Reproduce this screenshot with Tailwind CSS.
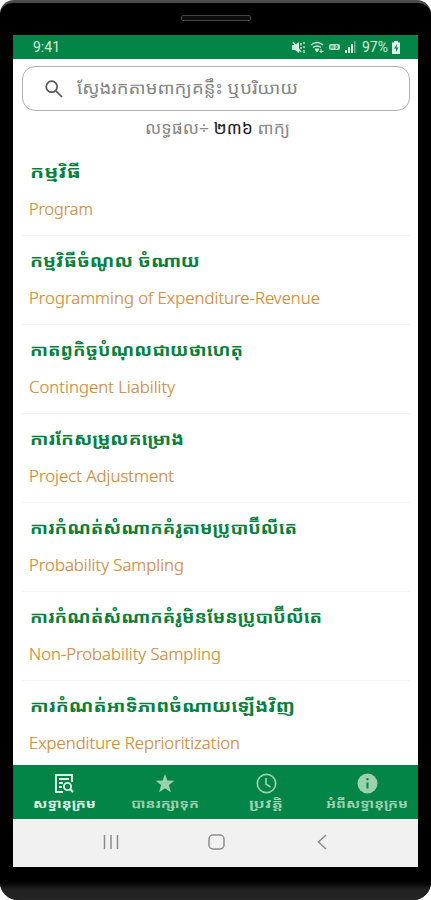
<!DOCTYPE html>
<html lang="km">
<head>
<meta charset="utf-8">
<title>សទ្ទានុក្រម</title>
<script src="https://cdn.jsdelivr.net/npm/@tailwindcss/browser@4"></script>
</head>
<body class="w-[431px] h-[900px] overflow-hidden bg-white font-['Noto_Sans','Noto_Sans_Khmer','Khmer_OS',sans-serif]">
<div class="w-[431px] h-[900px] rounded-t-[14px] rounded-b-[18px] bg-black border-t-[3px] border-[#4b4b4b] flex flex-col overflow-hidden">
  <div class="h-[32px] shrink-0 flex justify-center pt-[12px]"><div class="w-[70px] h-[6px] rounded-[2px] border border-[#454545] bg-[#0c0c0c]"></div></div>
  <div class="mx-[13px] h-[832px] shrink-0 bg-white flex flex-col overflow-hidden">
    <header class="h-[24px] shrink-0 bg-[#038547] flex items-center pl-[20px] pr-[18px] text-[#d2eddd] font-[Roboto,sans-serif]">
      <span class="text-[14px] mr-auto">9:41</span>
      <svg class="w-[13px] h-[13px] mr-[5px]" viewBox="0 0 13 13" fill="currentColor"><path d="M0 4h3l4-3v11L3 9H0z"/><path d="M1 1l8 10M9 2v2.500M9 6v2M12 1v2M12 5v2M12 9v3" stroke="currentColor" stroke-width="1.300"/></svg>
      <svg class="w-[15px] h-[13px] mr-[4px]" viewBox="0 0 15 13" fill="none" stroke="currentColor" stroke-width="1.300"><path d="M1 4Q7 -1 13 4M3 6.500Q7 3.500 11 6.500"/><path d="M5 8h4l-2 3zM11 8v4M9.500 10.500h4" fill="currentColor" stroke-width="1"/></svg>
      <svg class="w-[12px] h-[8px] mr-[4px]" viewBox="0 0 12 8"><rect x="0" y="1" width="11" height="6" rx="2" fill="#b9dec9"/><path d="M2 2.500v3M4 2.500v3M2 4h2M7 2.500v3h1q1-1.500 0-3z" stroke="#038547" stroke-width=".8" fill="none"/></svg>
      <svg class="w-[11px] h-[12px] mr-[6px]" viewBox="0 0 11 12" fill="currentColor"><path d="M0 9h2v3H0zM3 6h2v6H3zM6 3h2v9H6z"/><path opacity=".5" d="M9 0h1.500v12H9z"/></svg>
      <span class="text-[14px] mr-[4px]">97%</span>
      <svg class="w-[8px] h-[13px]" viewBox="0 0 8 13"><path d="M2 0h4v1.500h2V13H0V1.500h2z" fill="#e4f6eb"/><path d="M5 3L2 7.500h2V11l2.500-4.500h-2z" fill="#038547"/></svg>
    </header>
    <div class="h-[51px] shrink-0 pt-[7px] pl-[9px] pr-[8px]">
      <div class="h-[45px] rounded-[13px] border border-[#b0b0b0] flex items-center pl-[22px]">
        <svg class="w-[18px] h-[18px] mr-[14px]" viewBox="0 0 18 18" fill="none" stroke="#555" stroke-width="1.700"><circle cx="6.700" cy="6.700" r="5.500"/><path d="M11 11l6 6"/></svg>
        <svg class="w-[224px] h-[34px] overflow-visible" fill="#858585"><text x="0" y="22" font-size="16" textLength="221" lengthAdjust="spacingAndGlyphs">ស្វែងរកតាមពាក្យគន្លឹះ ឬបរិយាយ</text></svg>
      </div>
    </div>
    <div class="h-[37px] shrink-0 flex justify-center">
      <svg class="w-[146px] h-[34px] overflow-visible" fill="#888"><text x="2" y="24" font-size="16" textLength="145" lengthAdjust="spacingAndGlyphs">លទ្ធផល÷ <tspan fill="#222">២៣៦</tspan> ពាក្យ</text></svg>
    </div>
    <main class="h-[618px] shrink-0 pl-[9px] pr-[8px] overflow-hidden" id="list"></main>
    <nav class="h-[54px] shrink-0 bg-[#038547] grid grid-cols-4 text-[#9bd1b0]" id="tabs">
      <div class="flex flex-col items-center pt-[8px] pl-px text-[#e0f7e9]">
        <svg class="w-[20px] h-[21px]" viewBox="0 0 20 21" fill="none" stroke="currentColor" stroke-width="1.900"><path d="M18 9V2H2v17h7M5 6h10M5 10h4M5 14h3"/><circle cx="13.500" cy="13.500" r="3.600"/><path d="M16 16l3 3"/></svg>
        <svg class="w-[63px] h-[20px] overflow-visible" fill="currentColor"><text y="14" font-size="12.500" font-weight="700" textLength="63" lengthAdjust="spacingAndGlyphs">សទ្ទានុក្រម</text></svg>
      </div>
      <div class="flex flex-col items-center pt-[8px]">
        <svg class="w-[20px] h-[21px]" viewBox="0 0 20 21" fill="currentColor"><path d="M10 1l2.400 6.500 7 .2-5.500 4.300 2 7.200-5.900-4-5.900 4 2-7.200L.6 7.700l7-.2z"/></svg>
        <svg class="w-[68px] h-[20px] overflow-visible" fill="currentColor"><text y="14" font-size="12.500" font-weight="700" textLength="68" lengthAdjust="spacingAndGlyphs">បានរក្សាទុក</text></svg>
      </div>
      <div class="flex flex-col items-center pt-[8px]">
        <svg class="w-[21px] h-[21px]" viewBox="0 0 21 21" fill="none" stroke="currentColor" stroke-width="1.700"><circle cx="10.500" cy="10.500" r="9.200"/><path d="M10 5v6l4.500 3"/></svg>
        <svg class="w-[34px] h-[20px] overflow-visible" fill="currentColor"><text y="14" font-size="12.500" font-weight="700" textLength="34" lengthAdjust="spacingAndGlyphs">ប្រវត្តិ</text></svg>
      </div>
      <div class="flex flex-col items-center pt-[8px]">
        <svg class="w-[21px] h-[21px]" viewBox="0 0 21 21"><circle cx="10.500" cy="10.500" r="10" fill="currentColor"/><path d="M10.500 5v2.300M10.500 9.500v6" stroke="#038547" stroke-width="2"/></svg>
        <svg class="w-[82px] h-[20px] overflow-visible" fill="currentColor"><text y="14" font-size="12.500" font-weight="700" textLength="82" lengthAdjust="spacingAndGlyphs">អំពីសទ្ទានុក្រម</text></svg>
      </div>
    </nav>
    <div class="h-[48px] shrink-0 bg-[#f1f1f1] flex items-center pb-[2px] pl-[90px]">
      <svg class="w-[16px] h-[16px] mr-[89px]" viewBox="0 0 16 16" stroke="#8c8c8c" stroke-width="1.500"><path d="M1.500 1v14M8 1v14M14.500 1v14"/></svg>
      <svg class="w-[17px] h-[16px] mr-[92px]" viewBox="0 0 17 16" fill="none" stroke="#8c8c8c" stroke-width="1.500"><rect x="1" y="1" width="15" height="14" rx="4"/></svg>
      <svg class="w-[10px] h-[16px]" viewBox="0 0 10 16" fill="none" stroke="#8c8c8c" stroke-width="1.500"><path d="M9 1L1.500 8 9 15"/></svg>
    </div>
  </div>
  <div class="h-[11px] shrink-0"></div>
  <div class="grow bg-linear-to-b from-black via-[#202020] to-[#252525]"></div>
</div>
<script>
const terms = [
  ['កម្មវិធី', 51, 'Program', 64],
  ['កម្មវិធីចំណូល ចំណាយ', 170, 'Programming of Expenditure-Revenue', 291],
  ['កាតព្វកិច្ចបំណុលជាយថាហេតុ', 213, 'Contingent Liability', 146],
  ['ការកែសម្រួលគម្រោង', 154, 'Project Adjustment', 145],
  ['ការកំណត់សំណាកគំរូតាមប្រូបាប៊ីលីតេ', 267, 'Probability Sampling', 155],
  ['ការកំណត់សំណាកគំរូមិនមែនប្រូបាប៊ីលីតេ', 292, 'Non-Probability Sampling', 192],
  ['ការកំណត់អាទិភាពចំណាយឡើងវិញ', 265, 'Expenditure Reprioritization', 211]
];
document.getElementById('list').innerHTML = terms.map(([km, kw, en, ew]) => `
  <article class="h-[89px] border-b border-[#f4f4f4] pl-[8px] pt-[5px]">
    <svg class="w-full h-[40px] overflow-visible block" fill="#087f3d"><text y="26" font-size="16" font-weight="700" textLength="${kw}" lengthAdjust="spacingAndGlyphs">${km}</text></svg>
    <svg class="w-full h-[30px] overflow-visible block font-['Noto_Sans']" fill="#cf8a3a"><text x="-1" y="23" font-size="16" font-weight="300" stroke="#cf8a3a" stroke-width=".2" textLength="${ew}" lengthAdjust="spacingAndGlyphs">${en}</text></svg>
  </article>`).join('');
</script>
</body>
</html>
